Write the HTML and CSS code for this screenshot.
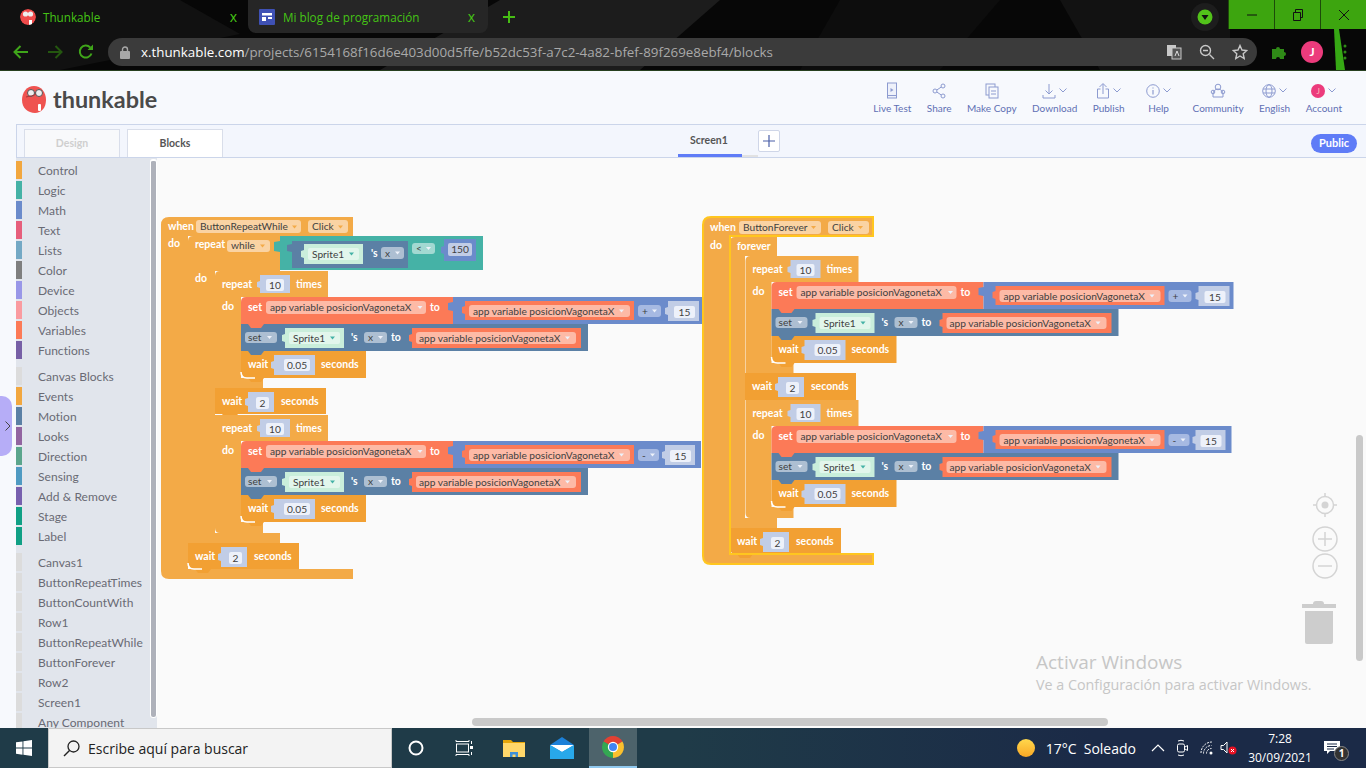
FILE: index.html
```html
<!DOCTYPE html>
<html lang="es">
<head>
  <meta charset="UTF-8" />
  <meta name="viewport" content="width=device-width, initial-scale=1.0"/>
  <title>Thunkable</title>
  <link rel="stylesheet" href="styles.css">
</head>
<body>
  <!-- browser window -->
  <div class="chrome">
    <svg class="chrome-bg" width="1366" height="70" viewBox="0 0 1366 70">
      <polygon points="0,0 180,0 240,34 60,70 0,70" fill="#111"/>
      <polygon points="500,0 720,0 640,70 380,70" fill="#1c1c1c"/>
      <polygon points="840,0 1000,0 940,70 800,70" fill="#0d0d0d"/>
      <polygon points="1060,0 1230,0 1230,70 1100,70" fill="#121212"/>
      <polygon points="1334,29 1339,29 1345,70 1336,70" fill="#36a814"/>
    </svg>
    <div class="tabs">
      <div class="tab tab-on">
        <svg class="fav" viewBox="0 0 16 16"><circle cx="8" cy="8" r="8" fill="#ef4b4b"/><circle cx="5.500" cy="5" r="2.600" fill="#eee"/><circle cx="10.500" cy="5" r="2.600" fill="#eee"/><rect x="9" y="11" width="3" height="5" fill="#fff"/></svg>
        <span class="tab-name">Thunkable</span>
        <span class="tab-x">x</span>
      </div>
      <div class="tab tab-off">
        <svg class="fav" viewBox="0 0 16 16"><rect width="16" height="16" fill="#3f51b5"/><rect x="3" y="4" width="10" height="2.500" fill="#fff"/><rect x="3" y="8" width="4" height="4" fill="#fff"/><rect x="9" y="8" width="4" height="2" fill="#fff"/></svg>
        <span class="tab-name">Mi blog de programación</span>
        <span class="tab-x">x</span>
      </div>
      <svg class="tab-plus" width="12" height="12" viewBox="0 0 12 12"><path d="M6 0v12M0 6h12" stroke="#46be14" stroke-width="2"/></svg>
      <div class="ext-round"><svg width="16" height="16" viewBox="0 0 16 16"><circle cx="8" cy="8" r="7.500" fill="#52c21a"/><path d="M4.500 6h7L8 11z" fill="#111"/></svg></div>
      <div class="winbtns">
        <div class="winbtn"><svg width="12" height="12" viewBox="0 0 12 12"><path d="M1 6h10" stroke="#111"/></svg></div>
        <div class="winbtn"><svg width="12" height="12" viewBox="0 0 12 12"><path d="M1.500 3.500h7v8h-7zM3.500 3.500v-3h7v8h-2" fill="none" stroke="#111"/></svg></div>
        <div class="winbtn"><svg width="12" height="12" viewBox="0 0 12 12"><path d="M1 1l10 10M11 1L1 11" stroke="#111"/></svg></div>
      </div>
    </div>
    <div class="toolbar">
      <svg width="16" height="14" viewBox="0 0 16 14"><path d="M15 7H2M7.500 1L1.500 7l6 6" fill="none" stroke="#3fa51a" stroke-width="2"/></svg>
      <svg class="fwd" width="16" height="14" viewBox="0 0 16 14"><path d="M1 7h13M8.500 1l6 6-6 6" fill="none" stroke="#24570f" stroke-width="2"/></svg>
      <svg class="reload" width="16" height="16" viewBox="0 0 16 16"><path d="M13.500 9.500A6 6 0 1 1 12.200 3.500" fill="none" stroke="#3fa51a" stroke-width="2"/><path d="M9.500 6H15V.5z" fill="#3fa51a"/></svg>
      <div class="url">
        <svg width="10" height="13" viewBox="0 0 10 13"><rect y="5" width="10" height="8" rx="1" fill="#a8a8a8"/><path d="M2.500 5V3.500a2.500 2.500 0 0 1 5 0V5" fill="none" stroke="#a8a8a8" stroke-width="1.400"/></svg>
        <span class="url-text"><b>x.thunkable.com</b>/projects/6154168f16d6e403d00d5ffe/b52dc53f-a7c2-4a82-bfef-89f269e8ebf4/blocks</span>
        <svg class="url-ico" width="16" height="16" viewBox="0 0 16 16"><rect x="1" y="1" width="9" height="11" fill="#c8c8c8"/><rect x="6" y="4" width="9" height="11" fill="#555" stroke="#c8c8c8"/><path d="M9 12l2-5 2 5" fill="none" stroke="#ddd"/></svg>
        <svg class="url-ico" width="16" height="16" viewBox="0 0 16 16"><circle cx="6.500" cy="6.500" r="5" fill="none" stroke="#c8c8c8" stroke-width="1.400"/><path d="M4 6.500h5M10.500 10.500L15 15" stroke="#c8c8c8" stroke-width="1.400"/></svg>
        <svg class="url-ico" width="16" height="16" viewBox="0 0 16 16"><path d="M8 1.500l2 4.500 4.800.5-3.600 3.200 1 4.800L8 12l-4.200 2.500 1-4.800L1.200 6.500 6 6z" fill="none" stroke="#c8c8c8" stroke-width="1.400"/></svg>
      </div>
      <svg class="puzzle" width="16" height="16" viewBox="0 0 16 16"><path d="M1 5h4a2 2 0 1 1 4 0h4v3a2 2 0 1 1 0 4v3H9a2 2 0 1 0-4 0H1z" fill="#2f8a17"/></svg>
      <span class="avatar">J</span>
      <svg class="dots" width="4" height="16" viewBox="0 0 4 16"><circle cx="2" cy="2" r="1.500" fill="#2f8a17"/><circle cx="2" cy="8" r="1.500" fill="#2f8a17"/><circle cx="2" cy="14" r="1.500" fill="#2f8a17"/></svg>
    </div>
  </div>

  <!-- thunkable header -->
  <div class="appbar">
    <div class="logo">
      <svg width="27" height="29" viewBox="0 0 27 29"><path d="M13 1c7 0 12 6 12 14 0 8-5 13-11 13C7 28 1 23 1 15 1 7 6 1 13 1z" fill="#ef5350"/><circle cx="10" cy="8" r="3.500" fill="#eee" stroke="#555"/><circle cx="18" cy="8" r="3.500" fill="#eee" stroke="#555"/><path d="M5 12c4-1 7-1 10-3" stroke="#a33" fill="none"/><rect x="17" y="19" width="3" height="7" rx="1" fill="#fff"/></svg>
      <span>thunkable</span>
    </div>
    <nav class="menu">
      <div class="menu-item"><div class="menu-ico"><svg width="14" height="18" viewBox="0 0 14 18"><rect x="2.500" y="1" width="9" height="15" fill="#eef1fa" stroke="#8d9bd0"/><path d="M5.500 6l3 2-3 2z" fill="#8d9bd0"/><path d="M2.500 13.500h9" stroke="#8d9bd0"/></svg></div><span>Live Test</span></div>
      <div class="menu-item"><div class="menu-ico"><svg width="14" height="16" viewBox="0 0 14 16"><circle cx="3" cy="8" r="2" fill="none" stroke="#8d9bd0"/><circle cx="11" cy="3" r="2" fill="none" stroke="#8d9bd0"/><circle cx="11" cy="13" r="2" fill="none" stroke="#8d9bd0"/><path d="M4.800 7l4.500-3M4.800 9l4.500 3" stroke="#8d9bd0"/></svg></div><span>Share</span></div>
      <div class="menu-item"><div class="menu-ico"><svg width="14" height="16" viewBox="0 0 14 16"><rect x="1" y="1" width="9" height="11" fill="none" stroke="#8d9bd0"/><rect x="4" y="4" width="9" height="11" fill="#f7f9fd" stroke="#8d9bd0"/><path d="M6 8h5M6 11h5" stroke="#8d9bd0"/></svg></div><span>Make Copy</span></div>
      <div class="menu-item"><div class="menu-ico"><svg width="14" height="16" viewBox="0 0 14 16"><path d="M7 1v10M3.500 7.500L7 11l3.500-3.500M1 12v3h12v-3" fill="none" stroke="#8d9bd0"/></svg><svg class="chev" width="8" height="5" viewBox="0 0 8 5"><path d="M.5.5L4 4 7.500.5" fill="none" stroke="#8d9bd0"/></svg></div><span>Download</span></div>
      <div class="menu-item"><div class="menu-ico"><svg width="14" height="16" viewBox="0 0 14 16"><path d="M7 11V1M3.500 4L7 .5 10.500 4M4.500 6H1.500v9h11V6h-3" fill="none" stroke="#8d9bd0"/></svg><svg class="chev" width="8" height="5" viewBox="0 0 8 5"><path d="M.5.5L4 4 7.500.5" fill="none" stroke="#8d9bd0"/></svg></div><span>Publish</span></div>
      <div class="menu-item menu-help"><div class="menu-ico"><svg width="14" height="14" viewBox="0 0 14 14"><circle cx="7" cy="7" r="6.300" fill="none" stroke="#8d9bd0"/><path d="M7 6v4.500M7 3.500v1" stroke="#8d9bd0" stroke-width="1.200"/></svg><svg class="chev" width="8" height="5" viewBox="0 0 8 5"><path d="M.5.5L4 4 7.500.5" fill="none" stroke="#8d9bd0"/></svg></div><span>Help</span></div>
      <div class="menu-item"><div class="menu-ico"><svg width="16" height="15" viewBox="0 0 16 15"><circle cx="8" cy="4" r="2.800" fill="none" stroke="#8d9bd0"/><path d="M3 11a5 5 0 0 1 10 0v3H3z" fill="none" stroke="#8d9bd0"/><circle cx="3" cy="9" r="1.800" fill="none" stroke="#8d9bd0"/><circle cx="13" cy="9" r="1.800" fill="none" stroke="#8d9bd0"/></svg></div><span>Community</span></div>
      <div class="menu-item"><div class="menu-ico"><svg width="14" height="14" viewBox="0 0 14 14"><circle cx="7" cy="7" r="6.300" fill="none" stroke="#8d9bd0"/><ellipse cx="7" cy="7" rx="3" ry="6.300" fill="none" stroke="#8d9bd0"/><path d="M1 5h12M1 9h12" stroke="#8d9bd0"/></svg><svg class="chev" width="8" height="5" viewBox="0 0 8 5"><path d="M.5.5L4 4 7.500.5" fill="none" stroke="#8d9bd0"/></svg></div><span>English</span></div>
      <div class="menu-item"><div class="menu-ico"><span class="menu-avatar">J</span><svg class="chev" width="8" height="5" viewBox="0 0 8 5"><path d="M.5.5L4 4 7.500.5" fill="none" stroke="#8d9bd0"/></svg></div><span>Account</span></div>
    </nav>
  </div>

  <div class="tabbar">
    <div class="mode mode-off">Design</div>
    <div class="mode">Blocks</div>
    <div class="screen-tab">Screen1</div>
    <div class="screen-add"><svg width="12" height="12" viewBox="0 0 12 12"><path d="M6 0v12M0 6h12" stroke="#4a5fa8" stroke-width="1.200"/></svg></div>
    <div class="public">Public</div>
  </div>

  <div class="main">
    <aside class="toolbox">
      <div class="cat"><i class="c-control"></i>Control</div>
      <div class="cat"><i class="c-logic"></i>Logic</div>
      <div class="cat"><i class="c-math"></i>Math</div>
      <div class="cat"><i class="c-text"></i>Text</div>
      <div class="cat"><i class="c-lists"></i>Lists</div>
      <div class="cat"><i class="c-color"></i>Color</div>
      <div class="cat"><i class="c-device"></i>Device</div>
      <div class="cat"><i class="c-objects"></i>Objects</div>
      <div class="cat"><i class="c-vars"></i>Variables</div>
      <div class="cat"><i class="c-funcs"></i>Functions</div>
      <div class="cat cat-sep"><i class="c-none"></i>Canvas Blocks</div>
      <div class="cat"><i class="c-control"></i>Events</div>
      <div class="cat"><i class="c-motion"></i>Motion</div>
      <div class="cat"><i class="c-looks"></i>Looks</div>
      <div class="cat"><i class="c-dir"></i>Direction</div>
      <div class="cat"><i class="c-sensing"></i>Sensing</div>
      <div class="cat"><i class="c-add"></i>Add &amp; Remove</div>
      <div class="cat"><i class="c-stage"></i>Stage</div>
      <div class="cat"><i class="c-stage"></i>Label</div>
      <div class="cat cat-sep"><i class="c-none"></i>Canvas1</div>
      <div class="cat"><i class="c-none"></i>ButtonRepeatTimes</div>
      <div class="cat"><i class="c-none"></i>ButtonCountWith</div>
      <div class="cat"><i class="c-none"></i>Row1</div>
      <div class="cat"><i class="c-none"></i>ButtonRepeatWhile</div>
      <div class="cat"><i class="c-none"></i>ButtonForever</div>
      <div class="cat"><i class="c-none"></i>Row2</div>
      <div class="cat"><i class="c-none"></i>Screen1</div>
      <div class="cat"><i class="c-none"></i>Any Component</div>
      <div class="toolbox-scroll"></div>
    </aside>
    <div class="expander"><svg width="6" height="10" viewBox="0 0 6 10"><path d="M.5.5L5 5 .5 9.500" fill="none" stroke="#444"/></svg></div>

    <div class="canvas">
      <svg class="blocks" width="1209" height="570" viewBox="157 158 1209 570">
        <!-- left stack -->
        <path class="ctl-lt" d="M161 225q0-8 8-8H353V236H188V569H353V579H169q-8 0-8-8Z"/>
        <text class="lbl" x="168" y="230">when</text>
        <rect class="ctl-f" x="196" y="220" width="105" height="13" rx="3"/>
        <text class="val" x="200" y="230">ButtonRepeatWhile</text>
        <path class="arr-o" d="M292 225.500h5l-2.500 3z"/>
        <rect class="ctl-f" x="308" y="220" width="40" height="13" rx="3"/>
        <text class="val" x="312" y="230">Click</text>
        <path class="arr-o" d="M338 225.500h5l-2.500 3z"/>
        <text class="lbl" x="168" y="247">do</text>

        <path class="ctl-lt" d="M188 241q0-5 5-5H280V271H215V533H280V543H188Z"/>
        <text class="lbl" x="195" y="248">repeat</text>
        <rect class="ctl-f" x="227" y="240" width="43" height="12" rx="3"/>
        <text class="val" x="231" y="249">while</text>
        <path class="arr-o" d="M260 244.500h5l-2.500 3z"/>
        <text class="lbl" x="195" y="282">do</text>

        <path class="logic" d="M280 236H483V270H280V252l-6-1v-9l6-1Z"/>
        <path class="sprite" d="M292 241H408V268H292V252l-5-1v-6l5-1Z"/>
        <path class="green" d="M304 244H363V264H304V258l-3-1v-6l3-1Z"/>
        <rect class="green-in" x="308" y="248" width="51" height="12" rx="2"/>
        <text class="val" x="312" y="257.500">Sprite1</text>
        <path class="arr-g" d="M349 252.500h5l-2.500 3z"/>
        <text class="lbl" x="371" y="257">'s</text>
        <rect class="sprite-f" x="381" y="247" width="23" height="12" rx="3"/>
        <text class="val" x="385" y="256.500">x</text>
        <path class="arr-w" d="M395 251.500h5l-2.500 3z"/>
        <rect class="logic-f" x="412" y="243" width="23" height="11" rx="3"/>
        <text class="val" x="416" y="252">&lt;</text>
        <path class="arr-w" d="M426 247h5l-2.500 3z"/>
        <path class="math" d="M444 239H476V261H444V254l-3-1v-6l3-1Z"/>
        <rect class="num" x="448" y="243" width="24" height="13" rx="2"/>
        <text class="val mid" x="460" y="253">150</text>

        <g transform="translate(215 271)">
          <path class="ctl-lt" d="M0 5q0-5 5-5H113V26H26V107H48V117H0Z"/>
          <text class="lbl" x="7" y="17">repeat</text>
          <path class="num" d="M45 4h30v18h-30v-5l-3-1v-5l3-1z"/>
          <rect class="num-in" x="51" y="8" width="18" height="12" rx="2"/>
          <text class="val mid" x="60" y="17.500">10</text>
          <text class="lbl" x="81" y="17">times</text>
          <text class="lbl" x="7" y="39">do</text>
          <path class="var" d="M26 31q0-5 5-5H238V53H26Z"/>
          <text class="lbl" x="33" y="40">set</text>
          <rect class="var-f" x="51" y="30" width="160" height="13" rx="3"/>
          <text class="val" x="55" y="40">app variable posicionVagonetaX</text>
          <path class="arr-w" d="M202.500 35h5l-2.500 3z"/>
          <text class="lbl" x="215" y="40">to</text>
          <path class="math" d="M238 26H487V53H238V40l-5-1v-7l5-1Z"/>
          <path class="var" d="M250 30H419V49H250V43l-3-1v-6l3-1Z"/>
          <rect class="var-f" x="254" y="34" width="161" height="12" rx="3"/>
          <text class="val" x="258" y="44">app variable posicionVagonetaX</text>
          <path class="arr-w" d="M404 38.500h5l-2.500 3z"/>
          <rect class="math-f" x="423" y="34" width="23" height="12" rx="3"/>
          <text class="val" x="427" y="44">+</text>
          <path class="arr-w" d="M437 38.500h5l-2.500 3z"/>
          <path class="num" d="M453 30h31v20h-31v-6l-3-1v-6l3-1z"/>
          <rect class="num-in" x="459" y="35" width="21" height="12" rx="2"/>
          <text class="val mid" x="469.500" y="44.500">15</text>
          <path class="sprite" d="M26 53H373V80H26Z"/>
          <rect class="sprite-f" x="30" y="61" width="32" height="11" rx="3"/>
          <text class="val" x="33" y="70">set</text>
          <path class="arr-w" d="M52 65h5l-2.500 3z"/>
          <path class="green" d="M70 57H129V77H70V71l-3-1v-6l3-1Z"/>
          <rect class="green-in" x="74" y="61" width="51" height="12" rx="2"/>
          <text class="val" x="78" y="70.500">Sprite1</text>
          <path class="arr-g" d="M115 65.500h5l-2.500 3z"/>
          <text class="lbl" x="136" y="70">'s</text>
          <rect class="sprite-f" x="149" y="61" width="23" height="11" rx="3"/>
          <text class="val" x="153" y="70">x</text>
          <path class="arr-w" d="M163 65h5l-2.500 3z"/>
          <text class="lbl" x="176" y="70">to</text>
          <path class="var" d="M197 57H366V77H197V71l-3-1v-6l3-1Z"/>
          <rect class="var-f" x="201" y="61" width="160" height="12" rx="3"/>
          <text class="val" x="204" y="70.500">app variable posicionVagonetaX</text>
          <path class="arr-w" d="M350 65.500h5l-2.500 3z"/>
          <path class="ctl" d="M26 80H151V107H32q-6 0-6-6Z"/>
          <text class="lbl" x="33" y="97">wait</text>
          <path class="num" d="M59 84h41v20h-41v-6l-3-1v-6l3-1z"/>
          <rect class="num-in" x="69" y="88" width="26" height="12" rx="2"/>
          <text class="val mid" x="82" y="97.500">0.05</text>
          <text class="lbl" x="106" y="97">seconds</text>
          <path class="tab-var" d="M33 53l3 4h10l3-4z"/>
          <path class="tab-spr" d="M33 80l3 4h10l3-4z"/>
          <path class="tab-ctl" d="M33 107l3 4h10l3-4z"/>
          <path class="nick" d="M26 101q0 6 6 6h8"/>
        </g>

        <g transform="translate(215 388)">
          <path class="ctl" d="M0 0H111V26H0Z"/>
          <text class="lbl" x="7" y="17">wait</text>
          <path class="num" d="M33 4h26v20h-26v-6l-3-1v-6l3-1z"/>
          <rect class="num-in" x="41" y="9" width="13" height="12" rx="2"/>
          <text class="val mid" x="47.500" y="18.500">2</text>
          <text class="lbl" x="66" y="17">seconds</text>
          <path class="tab-ctl" d="M7 26l3 4h10l3-4z"/>
        </g>

        <g transform="translate(215 415)">
          <path class="ctl-lt" d="M0 0H113V26H26V107H48V118H5q-5 0-5-5Z"/>
          <text class="lbl" x="7" y="17">repeat</text>
          <path class="num" d="M45 4h30v18h-30v-5l-3-1v-5l3-1z"/>
          <rect class="num-in" x="51" y="8" width="18" height="12" rx="2"/>
          <text class="val mid" x="60" y="17.500">10</text>
          <text class="lbl" x="81" y="17">times</text>
          <text class="lbl" x="7" y="39">do</text>
          <path class="var" d="M26 31q0-5 5-5H238V53H26Z"/>
          <text class="lbl" x="33" y="40">set</text>
          <rect class="var-f" x="51" y="30" width="160" height="13" rx="3"/>
          <text class="val" x="55" y="40">app variable posicionVagonetaX</text>
          <path class="arr-w" d="M202.500 35h5l-2.500 3z"/>
          <text class="lbl" x="215" y="40">to</text>
          <path class="math" d="M238 26H486V53H238V40l-5-1v-7l5-1Z"/>
          <path class="var" d="M250 30H419V49H250V43l-3-1v-6l3-1Z"/>
          <rect class="var-f" x="254" y="34" width="161" height="12" rx="3"/>
          <text class="val" x="258" y="44">app variable posicionVagonetaX</text>
          <path class="arr-w" d="M404 38.500h5l-2.500 3z"/>
          <rect class="math-f" x="423" y="34" width="21" height="12" rx="3"/>
          <text class="val" x="427" y="44">-</text>
          <path class="arr-w" d="M435 38.500h5l-2.500 3z"/>
          <path class="num" d="M450 30h30v20h-30v-6l-3-1v-6l3-1z"/>
          <rect class="num-in" x="455" y="35" width="21" height="12" rx="2"/>
          <text class="val mid" x="465.500" y="44.500">15</text>
          <path class="sprite" d="M26 53H373V80H26Z"/>
          <rect class="sprite-f" x="30" y="61" width="32" height="11" rx="3"/>
          <text class="val" x="33" y="70">set</text>
          <path class="arr-w" d="M52 65h5l-2.500 3z"/>
          <path class="green" d="M70 57H129V77H70V71l-3-1v-6l3-1Z"/>
          <rect class="green-in" x="74" y="61" width="51" height="12" rx="2"/>
          <text class="val" x="78" y="70.500">Sprite1</text>
          <path class="arr-g" d="M115 65.500h5l-2.500 3z"/>
          <text class="lbl" x="136" y="70">'s</text>
          <rect class="sprite-f" x="149" y="61" width="23" height="11" rx="3"/>
          <text class="val" x="153" y="70">x</text>
          <path class="arr-w" d="M163 65h5l-2.500 3z"/>
          <text class="lbl" x="176" y="70">to</text>
          <path class="var" d="M197 57H366V77H197V71l-3-1v-6l3-1Z"/>
          <rect class="var-f" x="201" y="61" width="160" height="12" rx="3"/>
          <text class="val" x="204" y="70.500">app variable posicionVagonetaX</text>
          <path class="arr-w" d="M350 65.500h5l-2.500 3z"/>
          <path class="ctl" d="M26 80H151V107H32q-6 0-6-6Z"/>
          <text class="lbl" x="33" y="97">wait</text>
          <path class="num" d="M59 84h41v20h-41v-6l-3-1v-6l3-1z"/>
          <rect class="num-in" x="69" y="88" width="26" height="12" rx="2"/>
          <text class="val mid" x="82" y="97.500">0.05</text>
          <text class="lbl" x="106" y="97">seconds</text>
          <path class="tab-var" d="M33 53l3 4h10l3-4z"/>
          <path class="tab-spr" d="M33 80l3 4h10l3-4z"/>
          <path class="tab-ctl" d="M33 107l3 4h10l3-4z"/>
          <path class="nick" d="M26 101q0 6 6 6h8"/>
        </g>

        <g transform="translate(188 543)">
          <path class="ctl" d="M0 0H111V26H6q-6 0-6-6Z"/>
          <text class="lbl" x="7" y="17">wait</text>
          <path class="num" d="M33 4h26v20h-26v-6l-3-1v-6l3-1z"/>
          <rect class="num-in" x="41" y="9" width="13" height="12" rx="2"/>
          <text class="val mid" x="47.500" y="18.500">2</text>
          <text class="lbl" x="66" y="17">seconds</text>
          <path class="tab-ctl" d="M7 26l3 4h10l3-4z"/>
          <path class="nick" d="M0 20q0 6 6 6h8"/>
        </g>

        <!-- right stack -->
        <path class="ctl-lt" d="M703 225q0-8 8-8H873V236H730V554H873V564H711q-8 0-8-8Z"/>
        <text class="lbl" x="710" y="231">when</text>
        <rect class="ctl-f" x="739" y="221" width="82" height="13" rx="3"/>
        <text class="val" x="743" y="231">ButtonForever</text>
        <path class="arr-o" d="M811 226h5l-2.500 3z"/>
        <rect class="ctl-f" x="828" y="221" width="41" height="13" rx="3"/>
        <text class="val" x="832" y="231">Click</text>
        <path class="arr-o" d="M858 226h5l-2.500 3z"/>
        <text class="lbl" x="710" y="249">do</text>

        <path class="ctl-lt" d="M730 242q0-5 5-5H777V256H745V518H777V528H730Z"/>
        <text class="lbl" x="737" y="250">forever</text>

        <g transform="translate(745.500 256)">
          <path class="ctl-lt" d="M0 5q0-5 5-5H113V26H26V107H48V117H0Z"/>
          <text class="lbl" x="7" y="17">repeat</text>
          <path class="num" d="M45 4h30v18h-30v-5l-3-1v-5l3-1z"/>
          <rect class="num-in" x="51" y="8" width="18" height="12" rx="2"/>
          <text class="val mid" x="60" y="17.500">10</text>
          <text class="lbl" x="81" y="17">times</text>
          <text class="lbl" x="7" y="39">do</text>
          <path class="var" d="M26 31q0-5 5-5H238V53H26Z"/>
          <text class="lbl" x="33" y="40">set</text>
          <rect class="var-f" x="51" y="30" width="160" height="13" rx="3"/>
          <text class="val" x="55" y="40">app variable posicionVagonetaX</text>
          <path class="arr-w" d="M202.500 35h5l-2.500 3z"/>
          <text class="lbl" x="215" y="40">to</text>
          <path class="math" d="M238 26H488V53H238V40l-5-1v-7l5-1Z"/>
          <path class="var" d="M250 30H419V49H250V43l-3-1v-6l3-1Z"/>
          <rect class="var-f" x="254" y="34" width="161" height="12" rx="3"/>
          <text class="val" x="258" y="44">app variable posicionVagonetaX</text>
          <path class="arr-w" d="M404 38.500h5l-2.500 3z"/>
          <rect class="math-f" x="423" y="34" width="23" height="12" rx="3"/>
          <text class="val" x="427" y="44">+</text>
          <path class="arr-w" d="M437 38.500h5l-2.500 3z"/>
          <path class="num" d="M453 30h31v20h-31v-6l-3-1v-6l3-1z"/>
          <rect class="num-in" x="459" y="35" width="21" height="12" rx="2"/>
          <text class="val mid" x="469.500" y="44.500">15</text>
          <path class="sprite" d="M26 53H373V80H26Z"/>
          <rect class="sprite-f" x="30" y="61" width="32" height="11" rx="3"/>
          <text class="val" x="33" y="70">set</text>
          <path class="arr-w" d="M52 65h5l-2.500 3z"/>
          <path class="green" d="M70 57H129V77H70V71l-3-1v-6l3-1Z"/>
          <rect class="green-in" x="74" y="61" width="51" height="12" rx="2"/>
          <text class="val" x="78" y="70.500">Sprite1</text>
          <path class="arr-g" d="M115 65.500h5l-2.500 3z"/>
          <text class="lbl" x="136" y="70">'s</text>
          <rect class="sprite-f" x="149" y="61" width="23" height="11" rx="3"/>
          <text class="val" x="153" y="70">x</text>
          <path class="arr-w" d="M163 65h5l-2.500 3z"/>
          <text class="lbl" x="176" y="70">to</text>
          <path class="var" d="M197 57H366V77H197V71l-3-1v-6l3-1Z"/>
          <rect class="var-f" x="201" y="61" width="160" height="12" rx="3"/>
          <text class="val" x="204" y="70.500">app variable posicionVagonetaX</text>
          <path class="arr-w" d="M350 65.500h5l-2.500 3z"/>
          <path class="ctl" d="M26 80H151V107H32q-6 0-6-6Z"/>
          <text class="lbl" x="33" y="97">wait</text>
          <path class="num" d="M59 84h41v20h-41v-6l-3-1v-6l3-1z"/>
          <rect class="num-in" x="69" y="88" width="26" height="12" rx="2"/>
          <text class="val mid" x="82" y="97.500">0.05</text>
          <text class="lbl" x="106" y="97">seconds</text>
          <path class="tab-var" d="M33 53l3 4h10l3-4z"/>
          <path class="tab-spr" d="M33 80l3 4h10l3-4z"/>
          <path class="tab-ctl" d="M33 107l3 4h10l3-4z"/>
          <path class="nick" d="M26 101q0 6 6 6h8"/>
        </g>

        <g transform="translate(745 373)">
          <path class="ctl" d="M0 0H111V27H0Z"/>
          <text class="lbl" x="7" y="17">wait</text>
          <path class="num" d="M33 4h26v20h-26v-6l-3-1v-6l3-1z"/>
          <rect class="num-in" x="41" y="9" width="13" height="12" rx="2"/>
          <text class="val mid" x="47.500" y="18.500">2</text>
          <text class="lbl" x="66" y="17">seconds</text>
          <path class="tab-ctl" d="M7 27l3 4h10l3-4z"/>
        </g>

        <g transform="translate(745.500 400)">
          <path class="ctl-lt" d="M0 0H113V26H26V107H48V118H5q-5 0-5-5Z"/>
          <text class="lbl" x="7" y="17">repeat</text>
          <path class="num" d="M45 4h30v18h-30v-5l-3-1v-5l3-1z"/>
          <rect class="num-in" x="51" y="8" width="18" height="12" rx="2"/>
          <text class="val mid" x="60" y="17.500">10</text>
          <text class="lbl" x="81" y="17">times</text>
          <text class="lbl" x="7" y="39">do</text>
          <path class="var" d="M26 31q0-5 5-5H238V53H26Z"/>
          <text class="lbl" x="33" y="40">set</text>
          <rect class="var-f" x="51" y="30" width="160" height="13" rx="3"/>
          <text class="val" x="55" y="40">app variable posicionVagonetaX</text>
          <path class="arr-w" d="M202.500 35h5l-2.500 3z"/>
          <text class="lbl" x="215" y="40">to</text>
          <path class="math" d="M238 26H486V53H238V40l-5-1v-7l5-1Z"/>
          <path class="var" d="M250 30H419V49H250V43l-3-1v-6l3-1Z"/>
          <rect class="var-f" x="254" y="34" width="161" height="12" rx="3"/>
          <text class="val" x="258" y="44">app variable posicionVagonetaX</text>
          <path class="arr-w" d="M404 38.500h5l-2.500 3z"/>
          <rect class="math-f" x="423" y="34" width="21" height="12" rx="3"/>
          <text class="val" x="427" y="44">-</text>
          <path class="arr-w" d="M435 38.500h5l-2.500 3z"/>
          <path class="num" d="M450 30h30v20h-30v-6l-3-1v-6l3-1z"/>
          <rect class="num-in" x="455" y="35" width="21" height="12" rx="2"/>
          <text class="val mid" x="465.500" y="44.500">15</text>
          <path class="sprite" d="M26 53H373V80H26Z"/>
          <rect class="sprite-f" x="30" y="61" width="32" height="11" rx="3"/>
          <text class="val" x="33" y="70">set</text>
          <path class="arr-w" d="M52 65h5l-2.500 3z"/>
          <path class="green" d="M70 57H129V77H70V71l-3-1v-6l3-1Z"/>
          <rect class="green-in" x="74" y="61" width="51" height="12" rx="2"/>
          <text class="val" x="78" y="70.500">Sprite1</text>
          <path class="arr-g" d="M115 65.500h5l-2.500 3z"/>
          <text class="lbl" x="136" y="70">'s</text>
          <rect class="sprite-f" x="149" y="61" width="23" height="11" rx="3"/>
          <text class="val" x="153" y="70">x</text>
          <path class="arr-w" d="M163 65h5l-2.500 3z"/>
          <text class="lbl" x="176" y="70">to</text>
          <path class="var" d="M197 57H366V77H197V71l-3-1v-6l3-1Z"/>
          <rect class="var-f" x="201" y="61" width="160" height="12" rx="3"/>
          <text class="val" x="204" y="70.500">app variable posicionVagonetaX</text>
          <path class="arr-w" d="M350 65.500h5l-2.500 3z"/>
          <path class="ctl" d="M26 80H151V107H32q-6 0-6-6Z"/>
          <text class="lbl" x="33" y="97">wait</text>
          <path class="num" d="M59 84h41v20h-41v-6l-3-1v-6l3-1z"/>
          <rect class="num-in" x="69" y="88" width="26" height="12" rx="2"/>
          <text class="val mid" x="82" y="97.500">0.05</text>
          <text class="lbl" x="106" y="97">seconds</text>
          <path class="tab-var" d="M33 53l3 4h10l3-4z"/>
          <path class="tab-spr" d="M33 80l3 4h10l3-4z"/>
          <path class="tab-ctl" d="M33 107l3 4h10l3-4z"/>
          <path class="nick" d="M26 101q0 6 6 6h8"/>
        </g>

        <g transform="translate(730 528)">
          <path class="ctl" d="M0 0H111V26H6q-6 0-6-6Z"/>
          <text class="lbl" x="7" y="17">wait</text>
          <path class="num" d="M33 4h26v20h-26v-6l-3-1v-6l3-1z"/>
          <rect class="num-in" x="41" y="9" width="13" height="12" rx="2"/>
          <text class="val mid" x="47.500" y="18.500">2</text>
          <text class="lbl" x="66" y="17">seconds</text>
          <path class="tab-ctl" d="M7 26l3 4h10l3-4z"/>
        </g>
        <path class="selected" d="M703 225q0-8 8-8H873V236H730V554H873V564H711q-8 0-8-8Z"/>

        <!-- workspace controls -->
        <g class="tool">
          <circle cx="1325" cy="505" r="8.500"/><circle class="tool-dot" cx="1325" cy="505" r="3.500"/>
          <path d="M1325 493v4M1325 513v4M1313 505h4M1333 505h4"/>
          <circle cx="1325" cy="539" r="12"/><path d="M1318 539h14M1325 532v14"/>
          <circle cx="1325" cy="566" r="12"/><path d="M1318 566h14"/>
        </g>
        <path class="trash" d="M1302 604h11q0-3 3-3h5q3 0 3 3h12v4h-34ZM1305 611h28v31q0 2-2 2h-24q-2 0-2-2Z"/>
        <rect class="scroll" x="1356" y="435" width="7" height="226" rx="3.500"/>
        <rect class="scroll" x="472" y="718" width="636" height="8" rx="4"/>
      </svg>
      <div class="activate">
        <div class="activate-big">Activar Windows</div>
        <div class="activate-small">Ve a Configuración para activar Windows.</div>
      </div>
    </div>
  </div>

  <!-- windows taskbar -->
  <div class="taskbar">
    <div class="start"><svg width="16" height="16" viewBox="0 0 16 16"><path d="M0 2.300l6.500-.9v6.200H0zM7.400 1.300L16 0v7.600H7.400zM0 8.500h6.500v6.200L0 13.800zM7.400 8.500H16V16l-8.600-1.200z" fill="#fff"/></svg></div>
    <div class="search">
      <svg width="17" height="17" viewBox="0 0 17 17"><circle cx="10.500" cy="6.500" r="5.500" fill="none" stroke="#222" stroke-width="1.300"/><path d="M6.500 10.500L1 16" stroke="#222" stroke-width="1.400"/></svg>
      <span>Escribe aquí para buscar</span>
    </div>
    <div class="task-ico"><svg width="16" height="16" viewBox="0 0 16 16"><circle cx="8" cy="8" r="6.500" fill="none" stroke="#fff" stroke-width="2"/></svg></div>
    <div class="task-ico"><svg width="18" height="16" viewBox="0 0 18 16"><path d="M1 0v1.500h13V0M1 16v-1.500h13V16" fill="none" stroke="#fff"/><rect x="1.500" y="4" width="12" height="8" fill="none" stroke="#fff"/><path d="M16.500 1v3M16.500 12v3" stroke="#fff"/><rect x="15" y="6" width="3" height="3" fill="#fff"/></svg></div>
    <div class="task-ico task-gap"><svg width="22" height="18" viewBox="0 0 22 18"><path d="M0 1h8l2 2h12v15H0z" fill="#e5a50a"/><rect y="4" width="22" height="14" fill="#ffd76a"/><path d="M7 18v-5h8v5h-2.500v-2.500h-3V18z" fill="#3f90d8"/></svg></div>
    <div class="task-ico"><svg width="24" height="22" viewBox="0 0 24 22"><path d="M0 8L12 0l12 8v14H0z" fill="#1c80d8"/><path d="M0 8h24L12 15z" fill="#fff"/><path d="M0 8l12 7 12-7v14H0z" fill="#28a8ea"/></svg></div>
    <div class="task-ico task-on"><svg width="22" height="22" viewBox="0 0 22 22"><path d="M11 11L1.500 5.500A11 11 0 0 1 20.500 5.500Z" fill="#e34133"/><path d="M11 11L20.500 5.500A11 11 0 0 1 11 22Z" fill="#fbc02d"/><path d="M11 11V22A11 11 0 0 1 1.500 5.500Z" fill="#34a853"/><circle cx="11" cy="11" r="5.200" fill="#fff"/><circle cx="11" cy="11" r="4" fill="#4285f4"/></svg></div>
    <div class="tray">
      <span class="sun"></span>
      <span class="weather">17°C&nbsp; Soleado</span>
      <svg class="tray-ico ti-chev" width="14" height="8" viewBox="0 0 14 8"><path d="M1 7l6-6 6 6" fill="none" stroke="#fff" stroke-width="1.200"/></svg>
      <svg class="tray-ico" width="12" height="18" viewBox="0 0 12 18"><rect x="1.500" y="5" width="7" height="8" rx="1.500" fill="none" stroke="#fff"/><path d="M9 8l2.500-1.500v5L9 10M2 2q3-1.500 6 0M2 16q3 1.500 6 0" fill="none" stroke="#fff"/></svg>
      <svg class="tray-ico ti-wifi" width="14" height="14" viewBox="0 0 14 14"><path d="M1 12a11 11 0 0 1 11-11M3.500 12.500a8 8 0 0 1 8-8M6.500 12.500a5 5 0 0 1 5-5" fill="none" stroke="#fff" stroke-dasharray="2 1"/><circle cx="11" cy="12" r="1.500" fill="#fff"/></svg>
      <svg class="tray-ico ti-vol" width="17" height="14" viewBox="0 0 17 14"><path d="M1 4.500h2.500L7 1v11L3.500 8.500H1z" fill="none" stroke="#fff"/><circle cx="12.500" cy="9.500" r="4" fill="#e81123"/><path d="M11 8l3 3M14 8l-3 3" stroke="#fff"/></svg>
      <div class="clock"><div>7:28</div><div>30/09/2021</div></div>
      <div class="notif"><svg width="16" height="14" viewBox="0 0 16 14"><path d="M0 0h16v10H6l-3 3v-3H0z" fill="#fff"/><path d="M3 3h10M3 5.500h10M3 8h7" stroke="#1b2a47"/></svg><span class="notif-num">1</span></div>
    </div>
  </div>
</body>
</html>
```

FILE: styles.css
```css
* {
  box-sizing: border-box;
}
html, body {
  margin: 0;
  height: 768px;
  overflow: hidden;
}
body {
  width: 1366px;
  background-color: #f7f9fd;
  font-family: Lato, "Noto Sans", sans-serif;
  display: flex;
  flex-direction: column;
}

/* browser */
.chrome {
  position: relative;
  height: 71px;
  flex: none;
  background-color: #070707;
  border-bottom: 1px solid #27401f;
}
.chrome-bg {
  position: absolute;
  left: 0;
  top: 0;
}
.tabs {
  position: relative;
  height: 34px;
  display: flex;
  align-items: flex-start;
  font-family: "Open Sans", sans-serif;
  font-size: 11.700px;
  color: #45c415;
}
.tab {
  height: 33px;
  display: flex;
  align-items: center;
}
.tab-on {
  width: 248px;
  padding: 0 11px 0 20px;
}
.tab-off {
  width: 240px;
  padding: 0 13px 0 11px;
  background-color: #262626;
  border-radius: 0 0 8px 8px;
}
.fav {
  width: 16px;
  height: 16px;
  margin-right: 8px;
  border-radius: 1px;
}
.tab-on .fav {
  margin-right: 7px;
  border-radius: 50%;
}
.tab-name {
  flex: 1;
}
.tab-x {
  font-size: 14px;
  line-height: 14px;
}
.tab-plus {
  margin: 11px 0 0 15px;
}
.ext-round {
  width: 28px;
  height: 28px;
  margin: 3px 9px 0 auto;
  border-radius: 50%;
  background-color: #1d1d1d;
  display: flex;
  align-items: center;
  justify-content: center;
}
.winbtns {
  display: flex;
  height: 29px;
}
.winbtn {
  width: 46px;
  height: 29px;
  background-color: #3da50f;
  border-left: 1px solid #1d4a0a;
  display: flex;
  align-items: center;
  justify-content: center;
}
.toolbar {
  position: relative;
  height: 36px;
  padding: 4px 0 4px 13px;
  display: flex;
  align-items: center;
}
.fwd {
  margin-left: 18px;
}
.reload {
  margin-left: 15px;
}
.url {
  width: 1149px;
  height: 28px;
  margin-left: 14px;
  padding: 0 9px 0 12px;
  border-radius: 14px;
  background-color: #3b3b3b;
  display: flex;
  align-items: center;
  color: #a9a9a9;
  font-family: "Open Sans", sans-serif;
  font-size: 13.350px;
}
.url-text {
  margin-left: 11px;
  flex: 1;
}
.url-text b {
  color: #fff;
  font-weight: 400;
}
.url-ico {
  margin-left: 17px;
}
.puzzle {
  margin-left: 14px;
}
.avatar {
  width: 22px;
  height: 22px;
  margin-left: 14px;
  border-radius: 50%;
  background-color: #ec3b7c;
  color: #fff;
  font-size: 12px;
  font-weight: 700;
  line-height: 22px;
  text-align: center;
}
.dots {
  margin-left: 20px;
}

/* thunkable header */
.appbar {
  height: 53px;
  flex: none;
  padding: 0 24px 0 21px;
  display: flex;
  align-items: center;
  justify-content: space-between;
}
.logo {
  display: flex;
  align-items: center;
  gap: 5px;
  margin-top: 3px;
  color: #4a4a4a;
  font-size: 23.400px;
  font-weight: 700;
}
.menu {
  display: flex;
  gap: 15.500px;
  color: #5f70b4;
  font-size: 10px;
}
.menu-item {
  display: flex;
  flex-direction: column;
  align-items: center;
  gap: 2px;
}
.menu-help {
  margin: 0 6px;
}
.menu-ico {
  height: 18px;
  display: flex;
  align-items: center;
  gap: 3px;
}
.menu-avatar {
  width: 14px;
  height: 14px;
  border-radius: 50%;
  background-color: #ec3b7c;
  color: #fbb;
  font-size: 8px;
  line-height: 14px;
  text-align: center;
}

.tabbar {
  height: 34px;
  flex: none;
  margin-left: 16px;
  padding-left: 7px;
  display: flex;
  align-items: flex-end;
  background-color: #f3f6fd;
  border: 1px solid #cbd5ea;
  border-right: 0;
}
.mode {
  width: 96px;
  height: 28px;
  margin-right: 7px;
  padding-top: 7px;
  background-color: #fff;
  border: 1px solid #d9deea;
  border-bottom: 0;
  color: #555;
  font-size: 10.500px;
  font-weight: 700;
  text-align: center;
}
.mode-off {
  background-color: #f8f9fb;
  color: #cfcfcf;
}
.screen-tab {
  position: relative;
  width: 80px;
  height: 32px;
  margin-left: 448px;
  padding: 9px 0 0 12px;
  color: #555;
  font-size: 10.500px;
  font-weight: 700;
}
.screen-tab::before {
  content: "";
  position: absolute;
  left: 0;
  right: 0;
  bottom: 0;
  height: 2px;
  background-color: #e2e2e2;
}
.screen-tab::after {
  content: "";
  position: absolute;
  left: 0;
  bottom: 0;
  width: 64px;
  height: 3px;
  background-color: #5f7cf7;
}
.screen-add {
  width: 22px;
  height: 22px;
  align-self: flex-start;
  margin-top: 5px;
  background-color: #fff;
  border: 1px solid #cfd6e8;
  border-radius: 2px;
  display: flex;
  align-items: center;
  justify-content: center;
}
.public {
  width: 46px;
  height: 19px;
  align-self: flex-start;
  margin: 9px 9px 0 auto;
  border-radius: 10px;
  background-color: #5f7cf7;
  color: #fff;
  font-size: 11px;
  font-weight: 700;
  line-height: 17px;
  text-align: center;
}

/* toolbox + workspace */
.main {
  position: relative;
  height: 570px;
  flex: none;
  padding-left: 16px;
  display: flex;
}
.toolbox {
  position: relative;
  width: 141px;
  height: 570px;
  flex: none;
  padding-top: 2px;
  overflow: hidden;
  background-color: #e1e5ec;
  color: #696a74;
  font-size: 12px;
  letter-spacing: .05px;
}
.cat {
  height: 20px;
  display: flex;
  align-items: center;
  white-space: nowrap;
}
.cat i {
  width: 6px;
  height: 18px;
  margin-right: 16px;
}
.cat-sep {
  margin-top: 6px;
}
.toolbox-scroll {
  position: absolute;
  left: 134px;
  top: 1px;
  width: 7px;
  height: 559px;
  border: 1px solid #fff;
  border-top-width: 2px;
  border-radius: 3px;
  background-color: #aeb1ba;
}
.c-control { background-color: #f2a73f; }
.c-logic { background-color: #45b2a6; }
.c-math { background-color: #6b8bcb; }
.c-text { background-color: #e65f7c; }
.c-lists { background-color: #74a9c5; }
.c-color { background-color: #7f7f7f; }
.c-device { background-color: #9997e8; }
.c-objects { background-color: #fa9ba0; }
.c-vars { background-color: #fc7a57; }
.c-funcs { background-color: #7760a6; }
.c-none { background-color: #dcdcdc; }
.c-motion { background-color: #5b80a5; }
.c-looks { background-color: #9264a0; }
.c-dir { background-color: #5ba58c; }
.c-sensing { background-color: #4f9ac2; }
.c-add { background-color: #7760ae; }
.c-stage { background-color: #10a085; }
.expander {
  position: absolute;
  left: 0;
  top: 238px;
  width: 12px;
  height: 60px;
  border-radius: 0 10px 10px 0;
  background-color: #b6adf7;
  display: flex;
  align-items: center;
  justify-content: flex-end;
  padding-right: 1px;
}
.canvas {
  position: relative;
  flex: 1;
  background-color: #fafafa;
}
.blocks {
  position: absolute;
  left: 0;
  top: 0;
}
.blocks text {
  font-family: Lato, sans-serif;
  font-size: 10.500px;
}
.blocks .lbl {
  fill: #fff;
  font-weight: 700;
}
.blocks .val {
  fill: #3f3f3f;
  font-size: 10.200px;
}
.blocks .mid {
  text-anchor: middle;
}
.ctl { fill: #f2a033; }
.ctl-lt { fill: #f3aa47; }
.ctl-f { fill: #fad3a3; }
.var { fill: #fc7a57; }
.var-f { fill: #fdbaa6; }
.math { fill: #6b8bcb; }
.math-f { fill: #a6b9e2; }
.num { fill: #c1cde6; }
.num-in { fill: #edf1fa; }
.sprite { fill: #5b80a5; }
.sprite-f { fill: #adbfd2; }
.green { fill: #c9eedb; }
.green-in { fill: #e2f6ec; }
.logic { fill: #45b2a6; }
.logic-f { fill: #a2d9d2; }
.arr-o { fill: #f3aa47; }
.arr-w { fill: #eef2fa; }
.arr-g { fill: #45b2a6; }
.tab-var { fill: #fc7a57; }
.tab-spr { fill: #5b80a5; }
.tab-ctl { fill: #f2a033; }
.nick {
  fill: none;
  stroke: #fff;
  stroke-width: 1.500;
}
.selected {
  fill: none;
  stroke: #ffc61f;
  stroke-width: 2;
}
.tool {
  fill: none;
  stroke: #d4d4d4;
  stroke-width: 1.500;
}
.tool-dot {
  fill: #d4d4d4;
  stroke: none;
}
.trash { fill: #cdcdcd; }
.scroll { fill: #c9c9c9; }
.activate {
  position: absolute;
  left: 879px;
  top: 492px;
  color: #c6c6c6;
  font-family: "Open Sans", sans-serif;
}
.activate-big {
  font-size: 19px;
  line-height: 24px;
}
.activate-small {
  font-size: 14.300px;
  line-height: 22px;
}

/* taskbar */
.taskbar {
  height: 40px;
  flex: none;
  display: flex;
  align-items: stretch;
  background: linear-gradient(90deg, #1f3b48, #1f3b48 50%, #1b2a47 80%);
  color: #fff;
  font-family: "Open Sans", sans-serif;
}
.start {
  width: 48px;
  display: flex;
  align-items: center;
  justify-content: center;
}
.search {
  width: 344px;
  padding-left: 14px;
  display: flex;
  align-items: center;
  gap: 8px;
  background-color: #f3f3f3;
  border: 1px solid #c8c8c8;
  color: #222;
  font-size: 14px;
}
.task-ico {
  width: 48px;
  display: flex;
  align-items: center;
  justify-content: center;
}
.task-gap {
  margin-left: 2px;
}
.task-on {
  margin-left: 3px;
  background-color: #4d636b;
  border-bottom: 2px solid #8fc8ee;
}
.tray {
  margin-left: auto;
  padding-right: 20px;
  display: flex;
  align-items: center;
}
.sun {
  width: 18px;
  height: 18px;
  border-radius: 50%;
  background: linear-gradient(#ffd84d, #f9a825);
}
.weather {
  margin-left: 11px;
  font-size: 14px;
}
.tray-ico {
  margin-left: 11px;
}
.ti-chev {
  margin-left: 15px;
}
.ti-wifi {
  margin-left: 12px;
}
.ti-vol {
  margin-left: 6px;
}
.clock {
  width: 76px;
  margin-left: 5px;
  font-size: 12px;
  line-height: 19px;
  text-align: center;
}
.notif {
  position: relative;
  width: 28px;
  display: flex;
  justify-content: center;
}
.notif-num {
  position: absolute;
  left: 16px;
  top: 5px;
  width: 15px;
  height: 15px;
  border-radius: 50%;
  background-color: #333;
  border: 1px solid #888;
  font-size: 10px;
  font-weight: 700;
  line-height: 13px;
  text-align: center;
}
```
